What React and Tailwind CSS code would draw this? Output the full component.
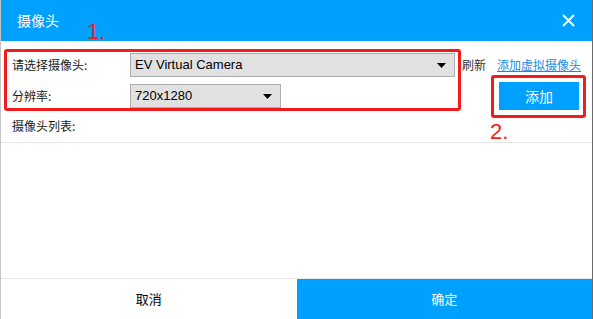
const blue = "bg-[#00a0ff]";

const Combo = ({ value, width }) => (
  <div
    className={`${width} h-[24px] bg-[#e1e1e1] border border-[#adadad] flex items-center justify-between pl-[4px] pr-[8px] text-[13px] text-black font-['Liberation_Sans','Noto_Sans_CJK_SC',sans-serif]`}
  >
    <span>{value}</span>
    <svg width="9" height="5" viewBox="0 0 9 5">
      <path d="M0 0 H9 L4.5 5 Z" fill="#000" />
    </svg>
  </div>
);

export default function App() {
  return (
    <div className="relative w-[593px] h-[319px] bg-white flex flex-col border-l border-l-[#c4c4c4] border-r border-r-[#6b6b6b] overflow-hidden font-['Noto_Sans_CJK_SC',sans-serif] text-[12px] text-[#1a1a1a]">
      {/* title bar */}
      <div className={`${blue} h-[41px] shrink-0 flex items-center justify-between pl-[16px] pr-[17px] text-white`}>
        <span className="text-[14px]">摄像头</span>
        <svg width="13" height="13" viewBox="0 0 13 13">
          <path d="M1 1 L12 12 M12 1 L1 12" stroke="#fff" strokeWidth="2" />
        </svg>
      </div>

      {/* row 1 */}
      <div className="mt-[12px] h-[24px] flex items-center pl-[11px]">
        <span className="w-[118px]">请选择摄像头:</span>
        <Combo value="EV Virtual Camera" width="w-[325px]" />
        <span className="ml-[7px] text-[#333]">刷新</span>
        <span className="ml-[11px] text-[#1c8ae0] underline underline-offset-1">添加虚拟摄像头</span>
      </div>

      {/* row 2 */}
      <div className="mt-[5px] h-[28px] flex items-center pl-[11px] pr-[13px]">
        <span className="w-[118px]">分辨率:</span>
        <Combo value="720x1280" width="w-[151px]" />
        <button className={`${blue} ml-auto w-[80px] h-[28px] text-white text-[14px]`}>添加</button>
      </div>

      {/* row 3 */}
      <div className="h-[33px] flex items-center pl-[11px] border-b border-[#e6e6e6]">
        <span>摄像头列表:</span>
      </div>

      <div className="flex-1" />

      {/* footer */}
      <div className="h-[41px] shrink-0 flex border-t border-[#e6e6e6]">
        <button className="flex-1 bg-white text-[13px] text-black">取消</button>
        <button className={`flex-1 ${blue} text-[13px] text-white`}>确定</button>
      </div>

      {/* annotations */}
      <div className="absolute left-[3px] top-[49px] w-[457px] h-[62px] border-[3px] border-[#f21c1c] rounded-[3px] pointer-events-none" />
      <div className="absolute left-[490px] top-[75px] w-[95px] h-[43px] border-[3px] border-[#f21c1c] rounded-[3px] pointer-events-none" />
      <span className="absolute left-[86px] top-[21px] text-[22px] leading-none text-[#f21c1c] font-['Liberation_Sans',sans-serif]">1.</span>
      <span className="absolute left-[489px] top-[121px] text-[22px] leading-none text-[#f21c1c] font-['Liberation_Sans',sans-serif]">2.</span>
    </div>
  );
}
